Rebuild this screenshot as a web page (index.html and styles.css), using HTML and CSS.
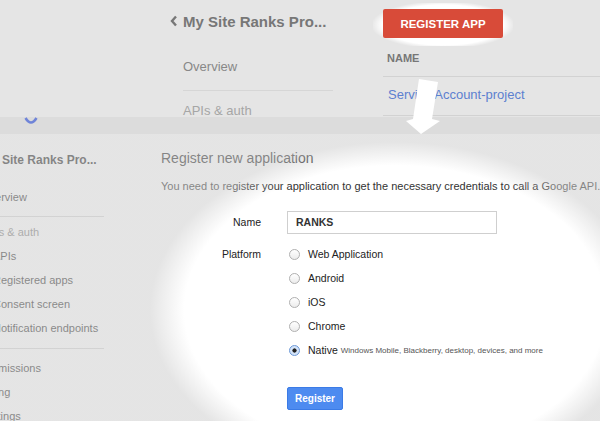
FILE: index.html
```html
<!DOCTYPE html>
<html>
<head>
<meta charset="utf-8">
<link rel="stylesheet" href="styles.css">
</head>
<body>
<div class="page">
  <section class="top">
    <div class="top-spacer"></div>
    <nav class="top-nav">
      <div class="top-title">
        <svg class="chev" width="8" height="12" viewBox="0 0 8 12"><path d="M6 1.5 L2 6 L6 10.5" fill="none" stroke="#777" stroke-width="2.4"/></svg>
        <span>My Site Ranks Pro...</span>
      </div>
      <div class="top-item first">Overview</div>
      <div class="top-item light">APIs &amp; auth</div>
    </nav>
    <div class="top-main">
      <div class="glow"><div class="red-btn">REGISTER APP</div></div>
      <div class="th">NAME</div>
      <div class="td"><span class="link">Service Account-project</span></div>
    </div>
  </section>

  <section class="lower">
    <div class="strip">
      <svg class="gfrag" width="14" height="8" viewBox="0 0 14 8"><path d="M1.5 1 Q7 10 12.5 1" fill="none" stroke="#6f84d8" stroke-width="2.6"/></svg>
    </div>
    <div class="lower-body">
      <aside class="side">
        <div class="side-title">My Site Ranks Pro...</div>
        <div class="side-item first">Overview</div>
        <div class="side-group group-a">
          <div class="side-item light">APIs &amp; auth</div>
          <div class="side-item sub">APIs</div>
          <div class="side-item sub">Registered apps</div>
          <div class="side-item sub">Consent screen</div>
          <div class="side-item sub">Notification endpoints</div>
        </div>
        <div class="side-group group-b">
          <div class="side-item">Permissions</div>
          <div class="side-item">Billing</div>
          <div class="side-item">Settings</div>
        </div>
      </aside>
      <main class="content">
        <h1 class="title">Register new application</h1>
        <p class="desc">You need to register your application to get the necessary credentials to call a Google API.</p>
        <div class="form">
          <div class="label name-label">Name</div>
          <div class="input">RANKS</div>
          <div class="label plat-label">Platform</div>
          <div class="radios">
            <div class="radio-row"><span class="radio"></span>Web Application</div>
            <div class="radio-row"><span class="radio"></span>Android</div>
            <div class="radio-row"><span class="radio"></span>iOS</div>
            <div class="radio-row"><span class="radio"></span>Chrome</div>
            <div class="radio-row"><span class="radio checked"></span>Native <small>Windows Mobile, Blackberry, desktop, devices, and more</small></div>
          </div>
          <div></div>
          <div><span class="blue-btn">Register</span></div>
        </div>
      </main>
    </div>
    <div class="dim"></div>
  </section>

  <svg class="arrow" width="600" height="421" viewBox="0 0 600 421"><polygon points="419,79 438,82 432,119 440,121 421,134 406,121 413,119" fill="#fff"/></svg>
</div>
</body>
</html>
```

FILE: styles.css
```css
* { box-sizing: border-box; margin: 0; padding: 0; }
html, body { width: 600px; height: 421px; overflow: hidden; }
body { font-family: "Liberation Sans", Arial, sans-serif; background: #e5e5e5; }
.page { position: relative; width: 600px; height: 421px; overflow: hidden; }

/* top panel */
.top { height: 117px; overflow: hidden; background: #e5e5e5; display: flex; }
.top-spacer { width: 170px; flex: none; }
.top-nav { width: 163px; flex: none; }
.top-title { display: flex; align-items: center; gap: 5px; margin-top: 11px; height: 20px; font-size: 15px; font-weight: bold; color: #777; white-space: nowrap; }
.chev { flex: none; }
.top-item { margin-left: 13px; font-size: 13px; line-height: 20px; color: #888; }
.top-item.first { margin-top: 26px; padding-bottom: 13px; border-bottom: 1px solid #d6d6d6; }
.top-item.light { color: #a6a6a6; margin-top: 10px; }
.top-main { margin-left: 50px; flex: 1; }
.glow { margin-left: -10px; margin-top: 3px; width: 140px; height: 43px; padding: 6px 10px 8px 10px; background: radial-gradient(ellipse 72px 24px at 70px 22px, #fff 0%, #fff 84%, rgba(255,255,255,0) 100%); }
.red-btn { width: 120px; height: 29px; background: #d84b39; border-radius: 2px; color: #fff; font-size: 11.5px; font-weight: bold; display: flex; align-items: center; justify-content: center; }
.th { margin-top: 5px; padding-left: 4px; font-size: 11px; font-weight: bold; line-height: 14px; color: #777; padding-bottom: 11px; border-bottom: 1px solid #d2d2d2; }
.td { padding: 10px 0 12px 5px; line-height: 16px; font-size: 13px; border-bottom: 1px solid #d2d2d2; }
.link { color: #5c80d0; }

/* lower panel */
.lower { position: relative; height: 304px; background: #fff; overflow: hidden; }
.strip { height: 17px; background: #dcdcdc; padding-left: 24px; }
.gfrag { display: block; }
.lower-body { display: flex; }
.side { width: 123px; margin-left: -19px; flex: none; font-size: 11px; color: #3a3a3a; white-space: nowrap; }
.side-title { margin-top: 14px; line-height: 24px; font-size: 12px; font-weight: bold; color: #333; margin-left: 1px; }
.side-item { line-height: 24px; }
.side-item.first { margin-top: 13px; padding-bottom: 7px; border-bottom: 1px solid #d9d9d9; }
.side-item.light { color: #888; }
.side-item.sub { margin-left: 12px; }
.group-a { margin-top: 3px; padding-bottom: 8px; border-bottom: 1px solid #d9d9d9; }
.group-b { margin-top: 7px; }
.content { margin-left: 57px; flex: 1; }
.title { margin-top: 14px; font-size: 14px; font-weight: normal; line-height: 20px; color: #333; }
.desc { margin-top: 10px; font-size: 11px; line-height: 16px; color: #333; white-space: nowrap; }
.form { margin-top: 17px; display: grid; grid-template-columns: 100px 210px; column-gap: 26px; font-size: 10.5px; color: #222; }
.label { text-align: right; line-height: 23px; }
.plat-label { margin-top: 8px; line-height: 24px; }
.input { height: 23px; border: 1px solid #cfcfcf; background: #fff; padding-left: 8px; line-height: 21px; font-weight: bold; color: #333; }
.radios { margin-top: 8px; white-space: nowrap; }
.radio-row { display: flex; align-items: center; height: 24px; }
.radio { width: 11px; height: 11px; border-radius: 50%; border: 1px solid #b0b0b0; background: linear-gradient(#fff, #ececec); margin: 0 8px 0 2px; flex: none; }
.radio.checked { border-color: #6b98d8; background: radial-gradient(circle, #222 0 1.8px, #d3e3f8 2.4px); }
.radio-row small { font-size: 8px; color: #555; margin-left: 3px; }
.blue-btn { display: inline-flex; align-items: center; justify-content: center; margin-top: 25px; width: 56px; height: 23px; background: #4d8bf0; border: 1px solid #3b7be6; border-radius: 2px; color: #fff; font-size: 10px; font-weight: bold; }
.dim { position: absolute; left: 0; right: 0; top: 17px; bottom: 0; pointer-events: none; background: radial-gradient(ellipse 245px 168px at 395px 176px, rgba(205,205,205,0) 0%, rgba(205,205,205,0) 86%, rgba(205,205,205,0.53) 100%); }

.arrow { position: absolute; left: 0; top: 0; pointer-events: none; }
```
